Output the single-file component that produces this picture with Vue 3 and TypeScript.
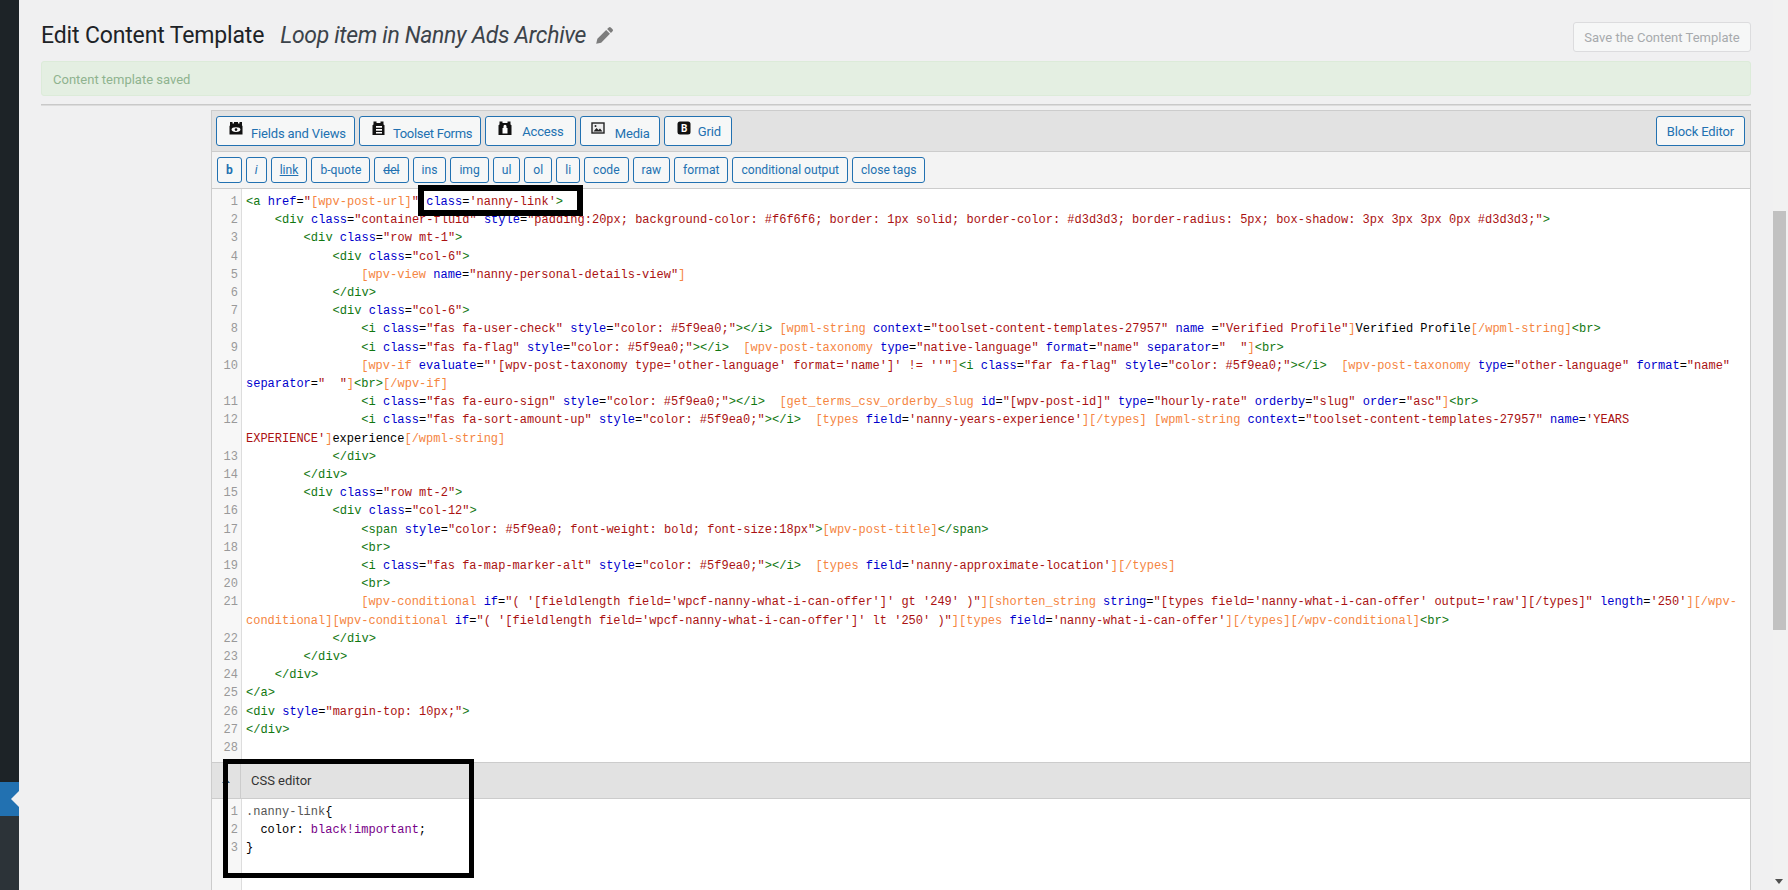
<script setup lang="ts">
interface Token {
  text: string
  kind: string
}

const mainButtons = [
  { label: 'Fields and Views', icon: 'fields' },
  { label: 'Toolset Forms', icon: 'forms' },
  { label: 'Access', icon: 'access' },
  { label: 'Media', icon: 'media' },
  { label: 'Grid', icon: 'grid' },
]

const quickTags = [
  'b', 'i', 'link', 'b-quote', 'del', 'ins', 'img', 'ul', 'ol', 'li',
  'code', 'raw', 'format', 'conditional output', 'close tags',
]

const pad = (n: number) => ' '.repeat(n)
const iconColor = `style="color: #5f9ea0;"></i>`

const source: string[] = [
  `<a href="[wpv-post-url]" class='nanny-link'>`,
  pad(4) + `<div class="container-fluid" style="padding:20px; background-color: #f6f6f6; border: 1px solid; border-color: #d3d3d3; border-radius: 5px; box-shadow: 3px 3px 3px 0px #d3d3d3;">`,
  pad(8) + `<div class="row mt-1">`,
  pad(12) + `<div class="col-6">`,
  pad(16) + `[wpv-view name="nanny-personal-details-view"]`,
  pad(12) + `</div>`,
  pad(12) + `<div class="col-6">`,
  pad(16) + `<i class="fas fa-user-check" ${iconColor} [wpml-string context="toolset-content-templates-27957" name ="Verified Profile"]Verified Profile[/wpml-string]<br>`,
  pad(16) + `<i class="fas fa-flag" ${iconColor}  [wpv-post-taxonomy type="native-language" format="name" separator="  "]<br>`,
  pad(16) + `[wpv-if evaluate="'[wpv-post-taxonomy type='other-language' format='name']' != ''"]<i class="far fa-flag" ${iconColor}  [wpv-post-taxonomy type="other-language" format="name" separator="  "]<br>[/wpv-if]`,
  pad(16) + `<i class="fas fa-euro-sign" ${iconColor}  [get_terms_csv_orderby_slug id="[wpv-post-id]" type="hourly-rate" orderby="slug" order="asc"]<br>`,
  pad(16) + `<i class="fas fa-sort-amount-up" ${iconColor}  [types field='nanny-years-experience'][/types] [wpml-string context="toolset-content-templates-27957" name='YEARS EXPERIENCE']experience[/wpml-string]`,
  pad(12) + `</div>`,
  pad(8) + `</div>`,
  pad(8) + `<div class="row mt-2">`,
  pad(12) + `<div class="col-12">`,
  pad(16) + `<span style="color: #5f9ea0; font-weight: bold; font-size:18px">[wpv-post-title]</span>`,
  pad(16) + `<br>`,
  pad(16) + `<i class="fas fa-map-marker-alt" ${iconColor}  [types field='nanny-approximate-location'][/types]`,
  pad(16) + `<br>`,
  pad(16) + `[wpv-conditional if="( '[fieldlength field='wpcf-nanny-what-i-can-offer']' gt '249' )"][shorten_string string="[types field='nanny-what-i-can-offer' output='raw'][/types]" length='250'][/wpv-conditional][wpv-conditional if="( '[fieldlength field='wpcf-nanny-what-i-can-offer']' lt '250' )"][types field='nanny-what-i-can-offer'][/types][/wpv-conditional]<br>`,
  pad(12) + `</div>`,
  pad(8) + `</div>`,
  pad(4) + `</div>`,
  `</a>`,
  `<div style="margin-top: 10px;">`,
  `</div>`,
  ``,
]

// rough version of what the editor's html + shortcode overlay does
const tokenize = (line: string): Token[] => {
  const out: Token[] = []
  const re = /<\/?\w+|\/?>|\[\/?[\w-]+|\]|"[^"]*"|'[^']*'|[\w-]+(?=\s*=)/g
  let opener = ''
  let last = 0
  for (const m of line.matchAll(re)) {
    const t = m[0]
    const at = m.index ?? 0
    if (at > last) out.push({ text: line.slice(last, at), kind: 'plain' })
    last = at + t.length
    if (t[0] === '<') {
      opener = '<'
      out.push({ text: t, kind: 'tag' })
    } else if (t.endsWith('>')) {
      out.push({ text: t, kind: 'tag' })
    } else if (t[0] === '[') {
      opener = '['
      out.push({ text: t, kind: 'short' })
    } else if (t === ']') {
      out.push({ text: t, kind: 'short' })
    } else if (t[0] === '"' || t[0] === "'") {
      if (opener === '<' && /^"\[.*\]"$/.test(t)) {
        out.push({ text: '"', kind: 'str' })
        out.push({ text: t.slice(1, -1), kind: 'short' })
        out.push({ text: '"', kind: 'str' })
      } else {
        out.push({ text: t, kind: 'str' })
      }
    } else {
      out.push({ text: t, kind: 'attr' })
    }
  }
  if (last < line.length) out.push({ text: line.slice(last), kind: 'plain' })
  // one span per wrap-able piece, so a wrapped token doesn't span two rows
  return out.flatMap((tok) =>
    (tok.text.match(/[^ -]*[ -]+|[^ -]+/g) ?? []).map((text) => ({ text, kind: tok.kind })),
  )
}

const htmlLines = source.map(tokenize)
</script>

<template>
  <div class="page">
    <aside class="sidebar">
      <div class="side-top"></div>
      <div class="side-active"></div>
      <div class="side-sub"></div>
    </aside>

    <main class="main">
      <header class="head">
        <h1 class="title">
          <span class="heading">Edit Content Template</span>
          <em class="name">Loop item in Nanny Ads Archive</em>
          <svg class="pencil" viewBox="0 0 16 16" width="19" height="19">
            <path d="M11.6 1.2a1.2 1.2 0 0 1 1.7 0l1.5 1.5a1.2 1.2 0 0 1 0 1.7l-1.4 1.4-3.2-3.2zM9.4 3.4l3.2 3.2-7.4 7.4-4.2 1 1-4.2z" fill="#7d7d7d" />
          </svg>
        </h1>
        <button class="save" disabled>Save the Content Template</button>
      </header>

      <div class="notice">Content template saved</div>
      <div class="rule"></div>

      <section class="panel">
        <div class="bar-main">
          <div class="bar-left">
            <button v-for="b in mainButtons" :key="b.label" class="btn big" :class="'is-' + b.icon">
              <svg v-if="b.icon === 'fields'" class="ico" viewBox="0 0 14 14">
                <path d="M1 4.500V1h2.500v1.500h1.500V1H9v1.500h1.500V1H13v3.500l.5.5v8.500H.5V5z" fill="#111" />
                <ellipse cx="7" cy="8.600" rx="4.400" ry="2.300" fill="#fff" />
                <circle cx="7" cy="8.600" r="1.300" fill="#111" />
              </svg>
              <svg v-else-if="b.icon === 'forms'" class="ico" viewBox="0 0 14 14">
                <path d="M1.500 3.500V.5h3v1.500h4V.5h3v3l1 .8V14h-12V4.300z" fill="#111" />
                <rect x="4" y="5" width="6" height="1.700" fill="#fff" />
                <rect x="4" y="8" width="6" height="1.700" fill="#fff" />
                <rect x="4" y="11" width="6" height="1.500" fill="#fff" />
              </svg>
              <svg v-else-if="b.icon === 'access'" class="ico" viewBox="0 0 14 14">
                <path d="M1.500 3.500V.5h3v1.500h5V.5h3v3l1 .8V14h-13V4.300z" fill="#111" />
                <path d="M4.500 7h5v5.500h-5zM5.500 7V5.200a1.500 1.500 0 0 1 3 0V7z" fill="#fff" />
              </svg>
              <svg v-else-if="b.icon === 'media'" class="ico" viewBox="0 0 14 14">
                <rect x="1" y="2" width="12" height="10" fill="#eee" stroke="#222" stroke-width="1.400" />
                <path d="M2.500 10.500l3-3.500 2 2 1.500-1.500 2.500 3z" fill="#222" />
                <circle cx="4.500" cy="5" r="1" fill="#222" />
              </svg>
              <svg v-else class="ico" viewBox="0 0 14 14">
                <rect x=".5" y=".5" width="13" height="13" rx="2.500" fill="#111" />
                <text x="7" y="11" text-anchor="middle" class="ico-b">B</text>
              </svg>
              <span class="btn-label">{{ b.label }}</span>
            </button>
          </div>
          <button class="btn big editor-switch">Block Editor</button>
        </div>

        <div class="bar-tags">
          <button v-for="t in quickTags" :key="t" class="btn tag" :class="'tag-' + t.replace(' ', '-')">{{ t }}</button>
        </div>

        <div class="code html-code">
          <div v-for="(tokens, i) in htmlLines" :key="i" class="line">
            <span class="num">{{ i + 1 }}</span>
            <pre class="text"><span v-for="(tok, j) in tokens" :key="j" :class="tok.kind">{{ tok.text }}</span></pre>
          </div>
        </div>

        <div class="css-head">
          <span class="toggle">
            <svg viewBox="0 0 8 5" width="8" height="5"><path d="M4 0l4 5H0z" fill="#2b5d88" /></svg>
          </span>
          <span class="css-title">CSS editor</span>
        </div>

        <div class="code css-code">
          <div class="line">
            <span class="num">1</span>
            <pre class="text"><span class="qual">.nanny-link</span><span class="plain">{</span></pre>
          </div>
          <div class="line">
            <span class="num">2</span>
            <pre class="text"><span class="plain">  color: </span><span class="atom">black!important</span><span class="plain">;</span></pre>
          </div>
          <div class="line">
            <span class="num">3</span>
            <pre class="text"><span class="plain">}</span></pre>
          </div>
        </div>
      </section>
    </main>

    <div class="scroll">
      <div class="thumb"></div>
      <div class="arrow"></div>
    </div>

    <!-- hand drawn marks on the screenshot -->
    <div class="mark mark-class"></div>
    <div class="mark mark-css"></div>
  </div>
</template>

<style scoped>
.page {
  position: relative;
  display: flex;
  width: 1788px;
  height: 890px;
  overflow: hidden;
  background: #f0f0f1;
  font-family: Roboto, "Liberation Sans", sans-serif;
  color: #1d2327;
}

.sidebar {
  display: flex;
  flex-direction: column;
  width: 19px;
  flex: none;
}

.side-top {
  height: 782px;
  background: #1d2327;
}

.side-active {
  display: flex;
  align-items: center;
  justify-content: flex-end;
  height: 34px;
  background: #2271b1;
}

.side-active::after {
  content: "";
  border: 8px solid transparent;
  border-right-color: #f0f0f1;
  border-left-width: 0;
}

.side-sub {
  flex: 1;
  background: #2c3338;
}

.main {
  width: 1710px;
  margin-left: 22px;
  flex: none;
}

.head {
  display: flex;
  align-items: flex-start;
  justify-content: space-between;
  height: 61px;
  padding-top: 22px;
  box-sizing: border-box;
}

.title {
  display: flex;
  align-items: center;
  height: 27px;
  margin: 0;
  font-size: 23px;
  font-weight: 400;
}

.heading {
  letter-spacing: -0.15px;
}

.name {
  margin-left: 16px;
  font-size: 23px;
  letter-spacing: -0.33px;
  color: #3c434a;
}

.pencil {
  margin-left: 9px;
}

.save {
  width: 178px;
  height: 30px;
  padding: 0;
  border: 1px solid #dcdcde;
  border-radius: 3px;
  background: #f6f7f7;
  color: #a7aaad;
  font: 13px Roboto, sans-serif;
}

.notice {
  height: 35px;
  box-sizing: border-box;
  padding: 0 11px;
  border: 1px solid #dcebd9;
  border-radius: 3px;
  background: #e4efe2;
  color: #8fb38f;
  font-size: 13px;
  line-height: 36px;
}

.rule {
  height: 1px;
  margin-top: 8px;
  background: #c9c9c9;
  border-bottom: 1px solid #dcdcdc;
}

.panel {
  height: 780px;
  margin: 4px 0 0 170px;
  border: 1px solid #ccc;
  border-bottom: 0;
  background: #fff;
}

.bar-main {
  display: flex;
  align-items: flex-start;
  justify-content: space-between;
  height: 40px;
  box-sizing: content-box;
  padding: 0 5px 0 4px;
  border-bottom: 1px solid #ccc;
  background: #e2e2e2;
}

.bar-left {
  display: flex;
  gap: 4px;
}

.btn {
  display: inline-flex;
  align-items: center;
  padding: 0 8px;
  border: 1px solid #2271b1;
  border-radius: 3px;
  background: #f6f7f7;
  color: #2271b1;
  font-family: Roboto, sans-serif;
  box-sizing: border-box;
}

.big {
  height: 30px;
  margin-top: 5px;
  padding: 0 10px 0 12px;
  font-size: 13px;
  letter-spacing: -0.15px;
}

.is-fields {
  padding-right: 8px;
}

.is-forms {
  padding-right: 8px;
  letter-spacing: -0.3px;
}

.is-access {
  padding-right: 11px;
}

.is-media {
  padding: 0 9px 0 10px;
}

.ico {
  width: 14px;
  height: 14px;
  margin: -6px 8px 0 0;
  flex: none;
}

.is-forms .ico,
.is-grid .ico {
  margin-right: 7px;
}

.is-access .ico,
.is-media .ico {
  margin-right: 10px;
}

.ico-b {
  fill: #fff;
  font: 700 10px Roboto, sans-serif;
}

.btn-label {
  margin-top: 4px;
}

.is-access .btn-label,
.is-grid .btn-label {
  margin-top: 0;
}

.editor-switch {
  padding: 0 10px;
}

.bar-tags {
  display: flex;
  gap: 4px;
  height: 37px;
  padding: 5px 0 0 5px;
  box-sizing: border-box;
  border-bottom: 1px solid #ccc;
  background: #f3f3f3;
}

.tag {
  height: 26px;
  font-size: 12.1px;
}

.tag-b {
  font-weight: 700;
}

.tag-i {
  font-style: italic;
}

.tag-link {
  text-decoration: underline;
}

.tag-del {
  text-decoration: line-through;
}

.code {
  padding-top: 4px;
  box-sizing: border-box;
  background: linear-gradient(to right, #f7f7f7 29px, #ddd 29px, #ddd 30px, #fff 30px);
}

.html-code {
  height: 573px;
}

.css-code {
  height: 95px;
}

.line {
  display: flex;
  line-height: 18.2px;
  font-family: "Liberation Mono", monospace;
  font-size: 12px;
}

.num {
  width: 26px;
  flex: none;
  text-align: right;
  color: #999;
}

.text {
  width: 1498px;
  min-height: 18px;
  margin: 0 0 0 8px;
  font: inherit;
  white-space: pre-wrap;
  color: #000;
}

.text .tag {
  color: #117711;
}

.attr {
  color: #0000cc;
}

.str {
  color: #aa1111;
}

.short {
  color: #f5853f;
}

.qual {
  color: #555;
}

.atom {
  color: #770088;
}

.css-head {
  display: flex;
  align-items: center;
  height: 35px;
  box-sizing: content-box;
  border-top: 1px solid #ccc;
  border-bottom: 1px solid #ccc;
  background: #e2e2e2;
}

.toggle {
  display: flex;
  align-items: center;
  justify-content: center;
  width: 28px;
  height: 100%;
  border-right: 1px solid #ccc;
}

.css-title {
  margin-left: 10px;
  font-size: 13px;
  color: #333;
}

.scroll {
  display: flex;
  flex-direction: column;
  align-items: flex-start;
  width: 15px;
  margin-left: 22px;
  background: #f1f1f1;
}

.thumb {
  width: 13px;
  height: 419px;
  margin-top: 211px;
  background: #c1c1c1;
}

.arrow {
  margin: auto 0 6px 2px;
  border: 4px solid transparent;
  border-top: 5px solid #505050;
  border-bottom: 0;
}

.mark {
  position: absolute;
  box-sizing: border-box;
  border: 6px solid #000;
}

.mark-class {
  left: 418px;
  top: 185px;
  width: 165px;
  height: 31px;
}

.mark-css {
  left: 223px;
  top: 759px;
  width: 251px;
  height: 119px;
  border-width: 5px;
}
</style>

<style>
html,
body {
  margin: 0;
  overflow: hidden;
  background: #f0f0f1;
}
</style>
